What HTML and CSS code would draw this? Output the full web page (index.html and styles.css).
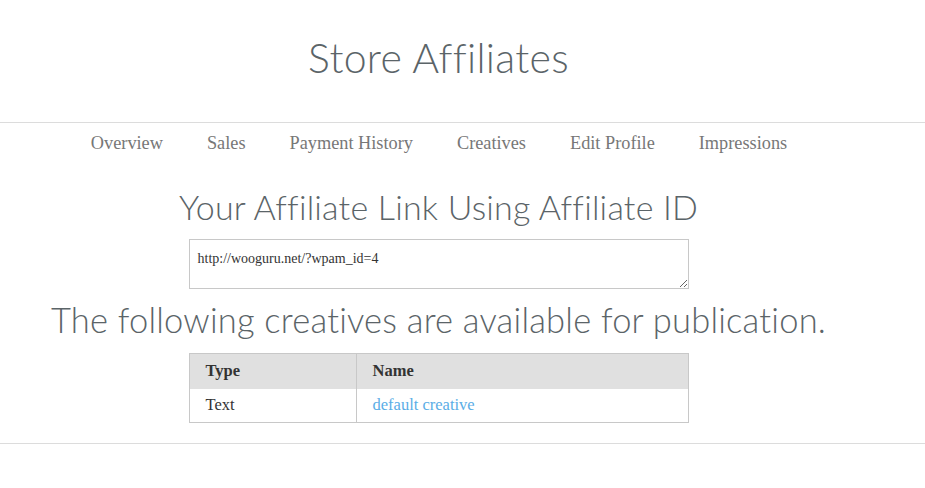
FILE: index.html
```html
<!DOCTYPE html>
<html>
<head>
<meta charset="utf-8">
<link rel="stylesheet" href="styles.css">
</head>
<body>
<div class="page">
  <header class="site-header">
    <h1 class="site-title">Store Affiliates</h1>
  </header>
  <nav class="nav">
    <a class="nav-item">Overview</a>
    <a class="nav-item">Sales</a>
    <a class="nav-item">Payment History</a>
    <a class="nav-item">Creatives</a>
    <a class="nav-item">Edit Profile</a>
    <a class="nav-item">Impressions</a>
  </nav>
  <main class="content">
    <h2 class="heading">Your Affiliate Link Using Affiliate ID</h2>
    <textarea class="link-box">http://wooguru.net/?wpam_id=4</textarea>
    <h2 class="heading heading-lg">The following creatives are available for publication.</h2>
    <table class="creatives">
      <thead>
        <tr><th class="col-type">Type</th><th>Name</th></tr>
      </thead>
      <tbody>
        <tr><td>Text</td><td><a class="creative-link">default creative</a></td></tr>
      </tbody>
    </table>
  </main>
  <div class="bottom-rule"></div>
</div>
</body>
</html>
```
FILE: styles.css
```css
* { box-sizing: border-box; }
html, body { margin: 0; padding: 0; background: #fff; }
body { font-family: "Liberation Serif", serif; color: #444; }
.page { width: 925px; }
.site-header {
  height: 123px;
  border-bottom: 1px solid #dcdcdc;
  width: 925px;
  display: flex;
  justify-content: center;
  padding-right: 48px;
}
.site-title {
  margin: 33px 0 0;
  font-family: "Lato", sans-serif;
  font-weight: 300;
  font-size: 41px;
  line-height: 50px;
  color: #5b6468;
  letter-spacing: 0.3px;
}
.nav {
  display: flex;
  justify-content: center;
  gap: 44px;
  padding-right: 47px;
  padding-top: 9px;
  height: 40px;
}
.nav-item {
  font-size: 18.3px;
  line-height: 22px;
  color: #777;
}
.content {
  width: 877px;
  display: flex;
  flex-direction: column;
  align-items: center;
}
.heading {
  margin: 0;
  font-family: "Lato", sans-serif;
  font-weight: 300;
  font-size: 34px;
  line-height: 40px;
  color: #5b6468;
  letter-spacing: 0.2px;
}
.content > .heading:first-child { margin-top: 24px; margin-bottom: 0; }
.link-box {
  width: 500px;
  height: 50px;
  margin-top: 12px;
  border: 1px solid #c8c8c8;
  padding: 11px 8px 9px;
  font-family: "Liberation Serif", serif;
  font-size: 14px;
  line-height: 16px;
  color: #333;
  resize: vertical;
}
.heading-lg { font-size: 34.5px; margin-top: 8px; line-height: 46px; }
.creatives {
  margin-top: 10px;
  width: 500px;
  border-collapse: collapse;
  border: 1px solid #c8c8c8;
  font-size: 16.5px;
}
.creatives th {
  background: #e0e0e0;
  text-align: left;
  font-weight: bold;
  color: #333;
  height: 35px;
  padding: 0 16px;
}
.creatives td {
  height: 34px;
  padding: 0 16px;
  color: #333;
}
.creatives th + th, .creatives td + td { border-left: 1px solid #c8c8c8; }
.col-type { width: 167px; }
.creative-link { color: #5aade6; }
.bottom-rule {
  margin-top: 20px;
  border-top: 1px solid #dcdcdc;
  width: 925px;
}
```
